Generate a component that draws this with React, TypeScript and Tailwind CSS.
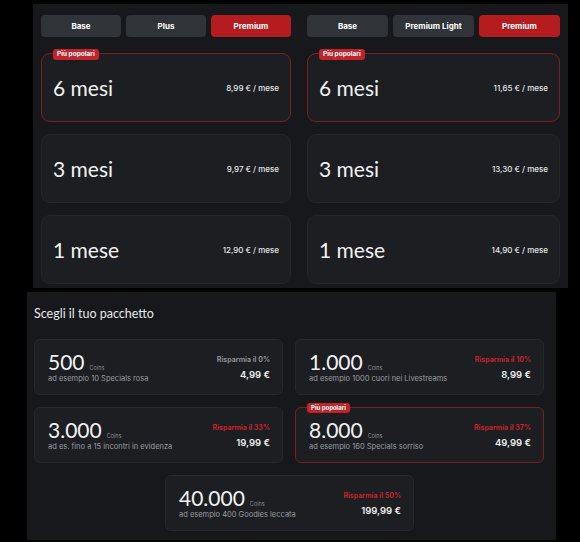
import React from "react";

type Plan = { label: string; price: string; popular?: boolean };

const leftPlans: Plan[] = [
  { label: "6 mesi", price: "8,99 € / mese", popular: true },
  { label: "3 mesi", price: "9,97 € / mese" },
  { label: "1 mese", price: "12,90 € / mese" },
];

const rightPlans: Plan[] = [
  { label: "6 mesi", price: "11,65 € / mese", popular: true },
  { label: "3 mesi", price: "13,30 € / mese" },
  { label: "1 mese", price: "14,90 € / mese" },
];

type Pack = { coins: string; desc: string; save: string; price: string; red?: boolean; popular?: boolean };

const packs: Pack[] = [
  { coins: "500", desc: "ad esempio 10 Specials rosa", save: "Risparmia il 0%", price: "4,99 €" },
  { coins: "1.000", desc: "ad esempio 1000 cuori nei Livestreams", save: "Risparmia il 10%", price: "8,99 €", red: true },
  { coins: "3.000", desc: "ad es. fino a 15 incontri in evidenza", save: "Risparmia il 33%", price: "19,99 €", red: true },
  { coins: "8.000", desc: "ad esempio 160 Specials sorriso", save: "Risparmia il 37%", price: "49,99 €", red: true, popular: true },
];

const lastPack: Pack = { coins: "40.000", desc: "ad esempio 400 Goodies leccata", save: "Risparmia il 50%", price: "199,99 €", red: true };

const display = { fontFamily: "Lato, Inter, sans-serif" };

function Badge({ className }: { className: string }) {
  return (
    <span className={`absolute -top-[5px] left-[11px] bg-[#c1232a] text-white font-bold leading-none rounded-[3px] px-[4px] py-[2px] ${className}`}>
      Più popolari
    </span>
  );
}

function PlanPanel({ tabs, plans, className }: { tabs: string[]; plans: Plan[]; className: string }) {
  return (
    <div className={`bg-[#16181b] px-[8px] pt-[11px] h-[284px] ${className}`}>
      <div className="grid grid-cols-3 gap-[5px]">
        {tabs.map((t, i) => (
          <div
            key={t}
            className={`h-[22px] rounded-[4px] flex items-center justify-center text-[8px] font-bold text-white ${
              i === 2 ? "bg-[#b51c1f]" : "bg-[#303337]"
            }`}
          >
            {t}
          </div>
        ))}
      </div>
      <div className="mt-[16px] flex flex-col gap-[12px]">
        {plans.map((p) => (
          <div
            key={p.label}
            className={`relative h-[69px] rounded-[9px] bg-[#1c1e22] border flex items-center justify-between pl-[11px] pr-[11px] ${
              p.popular ? "border-[#7c1f24]" : "border-[#24262a]"
            }`}
          >
            {p.popular && <Badge className="text-[6.5px]" />}
            <span className="text-[21px] text-[#f2f2f2] leading-none" style={display}>{p.label}</span>
            <span className="text-[8px] text-[#e6e6e6] font-medium">{p.price}</span>
          </div>
        ))}
      </div>
    </div>
  );
}

function PackCard({ p }: { p: Pack }) {
  return (
    <div
      className={`relative w-[249px] h-[56px] rounded-[6px] bg-[#1c1e22] border flex items-center justify-between pl-[13px] pr-[12px] ${
        p.popular ? "border-[#7c1f24]" : "border-[#26282c]"
      }`}
    >
      {p.popular && <Badge className="text-[6px]" />}
      <div className="flex flex-col">
        <div className="flex items-baseline">
          <span className="text-[21px] text-[#f2f2f2] leading-none" style={display}>{p.coins}</span>
          <span className="text-[5.5px] text-[#8a8d92] ml-[5px]">Coins</span>
        </div>
        <span className="text-[7.5px] text-[#9a9ca0] mt-[3px] leading-none">{p.desc}</span>
      </div>
      <div className="flex flex-col items-end gap-[7px] mt-[3px]">
        <span className={`text-[7px] font-bold leading-none ${p.red ? "text-[#c4242b]" : "text-[#8d8f93]"}`}>{p.save}</span>
        <span className="text-[9.5px] font-semibold text-[#eeeeee] leading-none">{p.price}</span>
      </div>
    </div>
  );
}

export default function App() {
  return (
    <div className="w-[580px] h-[542px] bg-black overflow-hidden" style={{ fontFamily: "Inter, 'Noto Sans', sans-serif" }}>
      <div className="flex pt-[4px] pl-[33px]">
        <PlanPanel tabs={["Base", "Plus", "Premium"]} plans={leftPlans} className="w-[266px]" />
        <PlanPanel tabs={["Base", "Premium Light", "Premium"]} plans={rightPlans} className="w-[269px]" />
      </div>
      <div className="mt-[4px] ml-[27px] w-[529px] h-[248px] bg-[#16181b] pl-[7px] pt-[16px]">
        <h2 className="text-[12.5px] text-[#e8e8e8] leading-none" style={display}>Scegli il tuo pacchetto</h2>
        <div className="mt-[18px] grid grid-cols-[249px_249px] gap-x-[12px] gap-y-[12px]">
          {packs.map((p) => (
            <PackCard key={p.coins} p={p} />
          ))}
        </div>
        <div className="mt-[12px] pl-[131px]">
          <PackCard p={lastPack} />
        </div>
      </div>
    </div>
  );
}
